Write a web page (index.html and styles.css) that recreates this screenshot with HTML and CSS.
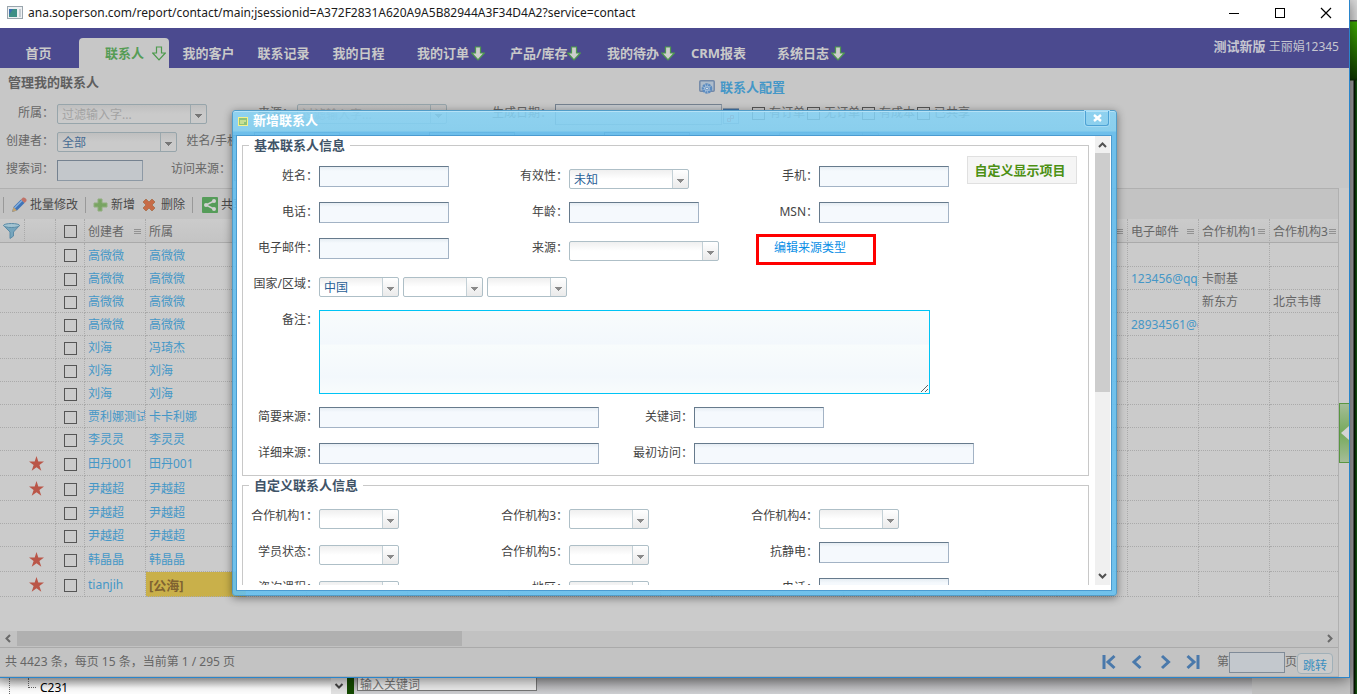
FILE: index.html
```html
<!DOCTYPE html>
<html lang="zh-CN">
<head>
<meta charset="utf-8">
<title>管理我的联系人</title>
<link rel="stylesheet" href="styles.css">
</head>
<body>
<svg class="defs" aria-hidden="true">
  <defs>
    <symbol id="arrow" viewBox="0 0 14 15"><path d="M4.500 1h5v6H13.300L7 13.800.7 7h3.800z" stroke-width="1.200"/></symbol>
    <symbol id="star" viewBox="0 0 15 15"><path d="M7.500 0l1.800 5.500H15l-4.600 3.400 1.900 5.800-4.800-3.500-4.800 3.500 1.900-5.800L0 5.500h5.700z" fill="#ba5648"/></symbol>
    <symbol id="cal" viewBox="0 0 17 17"><rect x=".5" y="1.500" width="15" height="15" fill="#c6cdd3" stroke="#8898a8"/><path d="M0 2h16v3H0z" fill="#3f74a8"/><path d="M7.500 8.500h3v3h-3zM4.500 11.500h3v3h-3z" fill="none" stroke="#b86a6a"/></symbol>
  </defs>
</svg>
<main class="window">
  <header class="titlebar">
    <svg width="16" height="13" viewBox="0 0 16 13"><rect x=".5" y=".5" width="15" height="12" fill="#eef1f3" stroke="#9aa5ad"/><rect x="2" y="3" width="8" height="8" fill="#3e8f86"/><path d="M2 3h4l-4 6z" fill="#3c6fb0"/><path d="M12 3h2v8h-2z" fill="#c5ccd2"/></svg>
    <span class="url">ana.soperson.com/report/contact/main;jsessionid=A372F2831A620A9A5B82944A3F34D4A2?service=contact</span>
    <span class="winbtns">
      <button aria-label="最小化"><svg width="12" height="12"><path d="M1 6.500h10" stroke="#000"/></svg></button>
      <button aria-label="最大化"><svg width="12" height="12"><rect x="1.500" y="1.500" width="9" height="9" fill="none" stroke="#000"/></svg></button>
      <button aria-label="关闭窗口"><svg width="12" height="12"><path d="M1 1l10 10M11 1L1 11" stroke="#000" stroke-width="1.200"/></svg></button>
    </span>
  </header>
  <nav class="nav">
    <a class="home" href="#">首页</a>
    <a class="active" href="#">联系人<svg width="14" height="15"><use href="#arrow"/></svg></a>
    <a class="plain" href="#">我的客户</a>
    <a class="plain" href="#">联系记录</a>
    <a class="plain" href="#">我的日程</a>
    <a class="drop" href="#">我的订单<svg width="14" height="15"><use href="#arrow"/></svg></a>
    <a class="drop product" href="#">产品/库存<svg width="14" height="15"><use href="#arrow"/></svg></a>
    <a class="drop" href="#">我的待办<svg width="14" height="15"><use href="#arrow"/></svg></a>
    <a class="plain" href="#">CRM报表</a>
    <a class="drop" href="#">系统日志<svg width="14" height="15"><use href="#arrow"/></svg></a>
    <span class="user"><b>测试新版</b> 王丽娟12345</span>
  </nav>
  <section class="head">
    <h1>管理我的联系人</h1>
    <a href="#"><svg width="16" height="15" viewBox="0 0 16 15"><rect x=".8" y=".8" width="14.400" height="10.400" rx="1" fill="#aebccb" stroke="#7389a8" stroke-width="1.500"/><circle cx="8" cy="8.500" r="4" fill="#b7cbe0" stroke="#5c8cc0" stroke-width="2.600" stroke-dasharray="2.200 .6"/><circle cx="8" cy="8.500" r="1.500" fill="#d4dde6" stroke="#5c8cc0"/></svg>联系人配置</a>
  </section>
  <section class="filters">
    <div class="frow">
      <label class="l57" for="f1">所属：</label><select class="w150 hint" id="f1"><option>过滤输入字...</option></select>
      <label class="l90" for="f2">来源：</label><select class="w150 hint" id="f2"><option>过滤输入字...</option></select>
      <label class="l108" for="f3">生成日期：</label><input class="date" id="f3"><svg class="cal" width="17" height="17"><use href="#cal"/></svg>
      <label class="tick"><input type="checkbox">有订单</label><label class="tick"><input type="checkbox">无订单</label><label class="tick"><input type="checkbox">有成本</label><label class="tick"><input type="checkbox">已共享</label>
    </div>
    <div class="frow">
      <label class="l57" for="f4">创建者：</label><select class="w120" id="f4"><option>全部</option></select>
      <label class="phone" for="f5">姓名/手机：</label><input class="w86" id="f5"><input class="w86 after" aria-label="电话"><input class="w86 after" aria-label="邮件"><select class="w100 after" aria-label="有效性"><option></option></select>
    </div>
    <div class="frow">
      <label class="l57" for="f6">搜索词：</label><input class="w86" id="f6">
      <label class="l91" for="f7">访问来源：</label><input class="w86" id="f7">
    </div>
  </section>
  <div class="main">
    <section class="list">
      <div class="toolbar">
        <i class="sep"></i>
        <button><svg width="16" height="16" viewBox="0 0 16 16"><path d="M1 15l1.500-5L10 2.500 13.500 6 6 13.500z" fill="#3f74b8"/><path d="M3.500 11L11 3.500" stroke="#86b0dc" stroke-width="1.500"/><path d="M10 2.500L12 .5Q14 0 15.500 2.500V4l-2 2z" fill="#bf7267"/><path d="M1 15l1.500-5L6 13.500z" fill="#c2a271"/></svg>批量修改</button>
        <i class="sep"></i>
        <button class="add"><svg width="15" height="14"><path d="M5 1h4v4h5v4H9v4H5V9H1V5h4z" fill="#79a463" stroke="#91ae7e"/></svg>新增</button>
        <button class="del"><svg width="14" height="14"><path d="M4 1l3 3 3-3 3 3-3 3 3 3-3 3-3-3-3 3-3-3 3-3-3-3z" fill="#c76b47" stroke="#ad7655"/></svg>删除</button>
        <i class="sep"></i>
        <button class="share"><svg width="16" height="16"><rect width="16" height="16" rx="1" fill="#559c59"/><path d="M12 4L4 8l8 4" fill="none" stroke="#d0d0d0" stroke-width="1.500"/><g fill="#d0d0d0"><circle cx="12" cy="4" r="2"/><circle cx="4" cy="8" r="2"/><circle cx="12" cy="12" r="2"/></g></svg>共享</button>
      </div>
      <table>
        <colgroup><col class="c25"><col class="c31"><col class="c29"><col class="c61"><col class="c100"><col class="c61"><col class="c101"><col class="c101"><col class="c152"><col class="c51"><col class="c61"><col class="c71"><col class="c71"><col class="c71"><col class="c71"><col class="c71"><col class="c71"><col class="c71"><col></colgroup>
        <thead><tr>
          <th class="funnel"><svg width="17" height="16" viewBox="0 0 17 16"><path d="M.5 2.500L7 9v6.500L10.500 13V9l6-6.500z" fill="#76a5bd" stroke="#5b8ba6"/><ellipse cx="8.500" cy="2.500" rx="8" ry="2" fill="#a3c3d1" stroke="#5b8ba6"/></svg></th><th></th><th class="mid"><input type="checkbox" aria-label="全选"></th>
          <th><div>创建者<i class="bars"></i></div></th><th>所属</th>
          <th></th><th></th><th></th><th></th><th></th><th></th><th></th><th></th><th></th><th></th><th><div><i class="bars"></i></div></th>
          <th><div>电子邮件<i class="bars"></i></div></th><th><div>合作机构1<i class="bars"></i></div></th><th><div>合作机构3<i class="bars"></i></div></th>
        </tr></thead>
        <tbody id="rows"></tbody>
      </table>
      <div class="hscroll">
        <svg width="17" height="15"><path d="M10 4L6.500 7.500 10 11" fill="none" stroke="#6a6a6a" stroke-width="2"/></svg><span class="thumb"></span><svg width="17" height="15"><path d="M7 4l3.500 3.500L7 11" fill="none" stroke="#6a6a6a" stroke-width="2"/></svg>
      </div>
      <footer class="pager">
        <span class="count">共 4423 条，每页 15 条，当前第 1 / 295 页</span>
        <button aria-label="第一页"><svg width="16" height="16"><path d="M3 1v14M13.500 2L7 8l6.500 6"/></svg></button>
        <button aria-label="上一页"><svg width="16" height="16"><path d="M11.500 2L5 8l6.500 6"/></svg></button>
        <button aria-label="下一页"><svg width="16" height="16"><path d="M5 2l6.500 6L5 14"/></svg></button>
        <button aria-label="最后一页"><svg width="16" height="16"><path d="M2.500 2L9 8l-6.500 6M13 1v14"/></svg></button>
        <label class="goto">第<input aria-label="页码">页</label><button class="jump">跳转</button>
      </footer>
    </section>
    <aside class="side"><button aria-label="展开侧栏"><svg width="8" height="14"><path d="M8 0v14L0 7z" fill="#d4d4d4"/></svg></button></aside>
  </div>

  <section class="dialog" role="dialog" aria-labelledby="dlg">
    <header>
      <svg width="10" height="9"><rect x=".5" y=".5" width="9" height="8" fill="#8ec37b" stroke="#f7f08a"/><path d="M2 4h6M2 6h4" stroke="#fffbb0"/></svg>
      <h2 id="dlg">新增联系人</h2>
      <button class="close" aria-label="关闭"><svg width="9" height="8"><path d="M1 1l7 6M8 1L1 7" stroke="#fff" stroke-width="2.400"/></svg></button>
    </header>
    <div class="dbody">
      <div class="scroller">
        <div class="forms">
          <fieldset class="first">
            <legend>基本联系人信息</legend>
            <div class="row"><div class="field"><label for="a1">姓名：</label><input id="a1"></div><div class="field"><label for="a2">有效性：</label><select class="w120" id="a2"><option>未知</option></select></div><div class="field wide"><label for="a3">手机：</label><input id="a3"><button class="custom">自定义显示项目</button></div></div>
            <div class="row"><div class="field"><label for="a4">电话：</label><input id="a4"></div><div class="field"><label for="a5">年龄：</label><input id="a5"></div><div class="field"><label for="a6">MSN：</label><input id="a6"></div></div>
            <div class="row"><div class="field"><label for="a7">电子邮件：</label><input id="a7"></div><div class="field"><label for="a8">来源：</label><select class="w150" id="a8"><option></option></select></div><div class="field linkcell"><a href="#">编辑来源类型</a><span class="mark"></span></div></div>
            <div class="row"><div class="field wide"><label for="a9">国家/区域：</label><select id="a9"><option>中国</option></select><select aria-label="省"><option></option></select><select aria-label="市"><option></option></select></div></div>
            <div class="row"><div class="field wide note"><label for="a10">备注：</label><textarea id="a10"></textarea></div></div>
            <div class="row"><div class="field half"><label for="a11">简要来源：</label><input class="w280" id="a11"></div><div class="field half"><label for="a12">关键词：</label><input id="a12"></div></div>
            <div class="row"><div class="field half"><label for="a13">详细来源：</label><input class="w280" id="a13"></div><div class="field half"><label for="a14">最初访问：</label><input class="w280" id="a14"></div></div>
          </fieldset>
          <fieldset>
            <legend>自定义联系人信息</legend>
            <div class="row"><div class="field"><label for="b1">合作机构1：</label><select id="b1"><option></option></select></div><div class="field"><label for="b2">合作机构3：</label><select id="b2"><option></option></select></div><div class="field"><label for="b3">合作机构4：</label><select id="b3"><option></option></select></div></div>
            <div class="row"><div class="field"><label for="b4">学员状态：</label><select id="b4"><option></option></select></div><div class="field"><label for="b5">合作机构5：</label><select id="b5"><option></option></select></div><div class="field"><label for="b6">抗静电：</label><input id="b6"></div></div>
            <div class="row"><div class="field"><label for="b7">咨询课程：</label><select id="b7"><option></option></select></div><div class="field"><label for="b8">地区：</label><select id="b8"><option></option></select></div><div class="field"><label for="b9">电话：</label><input id="b9"></div></div>
          </fieldset>
        </div>
        <div class="vscroll"><svg width="15" height="17"><path d="M4 11l3.500-3.500L11 11" fill="none" stroke="#505050" stroke-width="2"/></svg><span></span><svg width="15" height="17"><path d="M4 6l3.500 3.500L11 6" fill="none" stroke="#505050" stroke-width="2"/></svg></div>
      </div>
    </div>
  </section>
</main>
<div class="edge"></div>
<div class="under">
  <div class="tree"><i></i><i></i><span>C231</span></div>
  <div class="treedrop"><svg width="10" height="8"><path d="M1.500 2L5 5.500 8.500 2" fill="none" stroke="#444" stroke-width="2"/></svg></div>
  <div class="bar"></div>
  <input aria-label="关键词搜索" value="输入关键词">
</div>
<script src="app.js"></script>
</body>
</html>
```
FILE: app.js
```js
// creator, owner, starred, tall row, e-mail, partner 1, partner 3
const data = [
  ['高微微', '高微微'],
  ['高微微', '高微微', 0, 0, '123456@qq.com', '卡耐基'],
  ['高微微', '高微微', 0, 0, '', '新东方', '北京韦博'],
  ['高微微', '高微微', 0, 0, '28934561@qq.com'],
  ['刘海', '冯琦杰'],
  ['刘海', '刘海'],
  ['刘海', '刘海'],
  ['贾利娜测试', '卡卡利娜'],
  ['李灵灵', '李灵灵'],
  ['田丹001', '田丹001', 1, 1],
  ['尹越超', '尹越超', 1, 1],
  ['尹越超', '尹越超'],
  ['尹越超', '尹越超'],
  ['韩晶晶', '韩晶晶', 1, 1],
  ['tianjih', '[公海]', 1, 1]
];
document.getElementById('rows').innerHTML = data.map(([creator, owner, star, tall, mail = '', p1 = '', p3 = '']) => `
  <tr class="${tall ? 'tall' : ''}">
    <td class="none"></td>
    <td class="starcell">${star ? '<svg width="15" height="15"><use href="#star"/></svg>' : ''}</td>
    <td class="mid"><input type="checkbox" aria-label="选择 ${creator}"></td>
    <td><a href="#">${creator}</a></td>
    <td class="${owner === '[公海]' ? 'sea' : ''}"><a href="#">${owner}</a></td>
    ${'<td></td>'.repeat(11)}
    <td><a href="#">${mail}</a></td><td>${p1}</td><td>${p3}</td>
  </tr>`).join('');
```
FILE: styles.css
```css
* { box-sizing: border-box; }
html, body { height: 100%; }
body {
  margin: 0;
  display: grid;
  grid-template: minmax(678px, 1fr) 16px / minmax(0, 1fr) 7px;
  overflow: hidden;
  font: 12px/16px "Noto Sans", "Noto Sans CJK SC", sans-serif;
  color: #666;
  background: #c9c9c9;
}
input, select, textarea, button { font: inherit; color: inherit; margin: 0; }
button { background: none; border: 0; padding: 0; }
a { text-decoration: none; color: #4597c7; }
svg { display: block; flex: none; }
.defs { position: absolute; width: 0; height: 0; }

.window {
  position: relative;
  z-index: 1;
  display: flex;
  flex-direction: column;
  min-width: 0;
  background: #c7c7c7;
  border: solid #2a85cb;
  border-width: 0 1px 1px 0;
  box-shadow: 0 2px 14px rgba(0, 0, 0, .5);
}
.titlebar { height: 28px; padding: 0 10px 3px 7px; display: flex; align-items: center; gap: 5px; background: #fff; color: #1a1a1a; }
.winbtns { display: flex; gap: 20px; margin-left: auto; }
.winbtns button { width: 26px; display: flex; justify-content: center; }

.nav { height: 40px; padding-top: 10px; display: flex; background: #4b4a8f; font-size: 13px; font-weight: bold; }
.nav a { display: flex; align-items: center; color: #c9c9c9; white-space: nowrap; }
.nav a svg { fill: #cdcdcd; stroke: #4d9a4d; }
.nav .home { width: 79px; justify-content: center; padding-right: 2px; }
.nav .active { width: 90px; padding-left: 26px; gap: 8px; color: #559c55; background: #c7c7c7; border-radius: 4px 4px 0 0; margin-right: 2px; }
.nav .active svg { fill: none; stroke: #4d9a4d; }
.nav .plain { width: 75px; justify-content: center; }
.nav .drop { width: 95px; padding-left: 21px; gap: 2px; }
.nav .product { padding-left: 19px; gap: 0; }
.user { margin-left: auto; padding-right: 10px; color: #c6c6d0; font-weight: normal; font-size: 12px; white-space: nowrap; }
.user b { font-size: 13px; }

.head { height: 36px; padding-left: 8px; display: flex; font-size: 13px; }
.head h1 { width: 691px; margin: 6px 0 0; font-size: 13px; line-height: 16px; color: #5f5f5f; }
.head a { display: flex; align-items: center; align-self: flex-end; gap: 5px; height: 34px; font-weight: bold; }

.filters { height: 84px; display: flex; flex-direction: column; gap: 6px; }
.frow { display: flex; height: 22px; white-space: nowrap; }
.frow > label { text-align: right; padding: 1px 3px 0 0; flex: none; }
.l57 { width: 57px; }
.l90 { width: 90px; }
.l91 { width: 91px; }
.l108 { width: 108px; }
.phone { width: 77px; overflow: hidden; }
.w86 { width: 86px; }
.w100 { width: 100px; }
.w120 { width: 120px; }
.w150 { width: 150px; }
.w280 { width: 280px; }
.after { margin-left: 89px; }
.frow input:not([type]) { height: 21px; border: 1px solid; border-color: #758290 #8d99a5 #8d99a5 #758290; background: #c3c7cb; }
.frow input.date { width: 167px; }
.cal { margin: 3px 12px 0 1px; }
.frow > label.tick { width: 55px; padding: 1px 0 0; display: flex; gap: 4px; align-items: flex-start; }
.tick input { margin-top: 2px; }
input[type="checkbox"] { appearance: none; width: 13px; height: 13px; flex: none; border: 1px solid #555; background: transparent; }

select {
  appearance: none;
  height: 20px;
  padding: 2px 24px 0 4px;
  border: 1px solid #aebfc7;
  border-radius: 2px;
  color: #2a6096;
  background:
    linear-gradient(#8a8a8a, #8a8a8a) right 7px top 9px / 1px 4px no-repeat,
    linear-gradient(#8a8a8a, #8a8a8a) right 6px top 9px / 3px 3px no-repeat,
    linear-gradient(#8a8a8a, #8a8a8a) right 5px top 9px / 5px 2px no-repeat,
    linear-gradient(#8a8a8a, #8a8a8a) right 4px top 9px / 7px 1px no-repeat,
    linear-gradient(#c3d0d6, #c3d0d6) right 15px top 0 / 1px 20px no-repeat,
    linear-gradient(#fff, #e8e8e8) right 0 top 0 / 15px 20px no-repeat,
    linear-gradient(#efefef, #fff 9px);
}
.frow select {
  border-color: #97a5ab;
  color: #476b92;
  background:
    linear-gradient(#777, #777) right 7px top 9px / 1px 4px no-repeat,
    linear-gradient(#777, #777) right 6px top 9px / 3px 3px no-repeat,
    linear-gradient(#777, #777) right 5px top 9px / 5px 2px no-repeat,
    linear-gradient(#777, #777) right 4px top 9px / 7px 1px no-repeat,
    linear-gradient(#9ba8ad, #9ba8ad) right 15px top 0 / 1px 20px no-repeat,
    linear-gradient(#bfbfbf, #cacaca 9px);
}
.frow select.hint { color: #a3a3a3; }

.main { flex: 1; display: flex; min-height: 0; background: #cbcbcb; }
.list { flex: 1; min-width: 0; display: flex; flex-direction: column; border: 1px solid #b0b0b0; border-left: 0; }
.toolbar { height: 30px; flex: none; padding: 2px 3px 0; display: flex; align-items: center; background: #c3c3c3; color: #4a4a4a; }
.toolbar button { display: flex; align-items: center; gap: 3px; margin-left: 7px; }
.toolbar .del svg { margin-right: 2px; }
.toolbar .share { margin-left: 9px; }
.sep { width: 1px; height: 16px; background: #999; }
.sep:not(:first-child) { margin-left: 7px; }

table { width: 100%; table-layout: fixed; border-collapse: separate; border-spacing: 0; flex: none; }
.c25 { width: 25px; } .c29 { width: 29px; } .c31 { width: 31px; }
.c51 { width: 51px; } .c61 { width: 61px; } .c71 { width: 71px; }
.c100 { width: 100px; } .c101 { width: 101px; } .c152 { width: 152px; }
th, td { padding: 2px 0 0 3px; height: 23px; text-align: left; white-space: nowrap; overflow: hidden; border-right: 1px dotted #aaa; border-bottom: 1px dotted #aaa; }
th { height: 24px; font-weight: normal; border-bottom: 1px solid #aaa; background: linear-gradient(#cbcbcb, #c4c4c4); }
th.funnel { padding-top: 0; }
th div { display: flex; align-items: center; justify-content: space-between; padding-right: 4px; }
th:last-child div { padding-right: 2px; }
th:last-child, td:last-child { border-right: 0; }
.bars { width: 7px; height: 5px; margin-left: auto; flex: none; background: linear-gradient(#929292 1px, transparent 1px 2px, #929292 2px 3px, transparent 3px 4px, #929292 4px); }
.none { border-right-color: transparent; }
.mid { padding: 2px 0 0; }
.mid > * { display: block; margin: auto; }
.starcell { padding: 1px 0 0 4px; }
.tall td { height: 25px; }
tbody tr:first-child td { height: 24px; }
.sea { background: #c9b04a; }
.sea a { color: #806331; font-weight: bold; font-size: 13px; }

.hscroll { height: 16px; margin-top: auto; flex: none; display: flex; background: #c2c2c2; }
.thumb { width: 445px; background: #b0b0b0; margin-right: auto; height: 15px; }
.pager { height: 29px; flex: none; padding: 0 5px; display: flex; align-items: center; border-top: 1px solid #aaa; background: #c3c3c3; }
.count { margin-right: auto; }
.pager > button:not(.jump) { margin-right: 12px; }
.pager svg { fill: none; stroke: #4a79ab; stroke-width: 3; }
.goto { display: flex; align-items: center; margin-left: 4px; }
.goto input { width: 56px; height: 21px; border: 1px solid #7f8b98; background: #c3c8cd; }
.pager .jump { width: 36px; height: 21px; padding-top: 4px; margin: 3px 0 0; border: 1px solid #a0b0b8; border-radius: 4px; color: #3b8fc0; background: #cbcbcb; }
.side { width: 10px; padding-top: 215px; }
.side button { width: 10px; height: 60px; display: flex; align-items: center; justify-content: flex-end; border: 1px solid #599641; border-right: 0; background: linear-gradient(#a5bd98, #75a95a 50%, #a5bd98); }

.dialog {
  position: absolute;
  inset: 110px 232px 81px 232px;
  display: flex;
  flex-direction: column;
  padding: 0 4px 4px 3px;
  border: 1px solid #529dc8;
  border-radius: 3px;
  background: linear-gradient(rgba(134, 211, 246, .86), rgba(128, 208, 243, .86) 20px, rgba(98, 190, 240, .88) 21px, rgba(100, 192, 240, .88));
  box-shadow: 0 2px 8px rgba(0, 0, 0, .45), inset 0 1px #b5e2f7;
}
.dialog header { height: 24px; flex: none; padding-left: 2px; display: flex; align-items: flex-start; gap: 5px; }
.dialog header > svg { margin-top: 6px; }
.dialog h2 { margin: 1px 0 0; color: #fff; font-size: 13px; line-height: 16px; }
.close { margin: 0 3px 0 auto; width: 24px; height: 15px; display: flex; align-items: center; justify-content: center; border: 1px solid #4da2d5; border-top: 0; border-radius: 0 0 3px 3px; box-shadow: 0 0 0 1px #a5dbf4; }
.dbody { flex: 1; min-height: 0; padding-bottom: 5px; background: #fff; border: 1px solid #4b9bd0; color: #444; }
.scroller { height: 100%; display: flex; overflow: hidden; padding-right: 1px; }
.forms { flex: 1; min-width: 0; padding: 0 6px 0 5px; }
fieldset { margin: 1px 0 0; min-width: 0; padding: 13px 0 10px; border: 1px solid #c8c8c8; display: flex; flex-direction: column; gap: 14px; }
legend { margin-left: 6px; padding: 0 5px; font-size: 13px; line-height: 16px; font-weight: bold; color: #3f5468; }
.row { display: flex; min-height: 22px; }
.field { display: flex; align-items: flex-start; width: 250px; height: 22px; flex: none; }
.field.half { width: 375px; }
.field.wide { flex: 1; }
.field.note { height: auto; }
.field label { width: 76px; flex: none; text-align: right; white-space: nowrap; padding: 2px 1px 0 0; }
.field input { width: 130px; height: 21px; border: 1px solid; border-color: #667a8c #a3b3c5 #a3b3c5 #667a8c; background: linear-gradient(#e6edf3, #f5f9fd 4px); }
.field input.w280 { width: 280px; }
.field select { width: 80px; margin: 3px 4px 0 0; }
.field select.w120 { width: 120px; }
.field select.w150 { width: 150px; }
.field textarea { appearance: none; display: block; width: 611px; height: 84px; margin-bottom: -1px; border: 1px solid #00c4f5; outline: 0; background: linear-gradient(#f8fcfc, #f3f8fc 40%, #f8fcfc 42%, #f3f8fc 80%, #f8fcfc) padding-box; }
.custom { width: 110px; height: 28px; margin: -10px 0 0 18px; padding-right: 4px; flex: none; font-size: 13px; font-weight: bold; color: #4c9013; background: #f5f5f5; border: 1px solid #e0e0e0; white-space: nowrap; }
.linkcell { position: relative; padding: 2px 0 0 31px; }
.linkcell a { color: #0b8fe6; }
.mark { position: absolute; left: 13px; top: -4px; width: 120px; height: 31px; border: 3px solid #f00; }
.vscroll { width: 15px; display: flex; flex-direction: column; justify-content: space-between; background: #f0f0f0; }
.vscroll span { height: 239px; margin-bottom: auto; background: #cdcdcd; }

.edge { grid-row: 1 / 3; grid-column: 2; background: linear-gradient(#dcdcdc 20px, #333 20px 21px, #3fae00 22px, #123a00 78px, #0a2a00 80px, transparent 81px), linear-gradient(90deg, #a0a0a0 3px, #555 3px 4px, #061800 4px 5px, #145010 6px); }
.under { display: flex; min-width: 0; background: linear-gradient(90deg, transparent 1252px, #c3c3c3 1252px), linear-gradient(#a8a8aa, #d0d1d4); }
.tree { width: 331px; display: flex; padding-left: 9px; color: #000; background: linear-gradient(#ccc, #fff 10px); }
.tree i { width: 19px; border-left: 1px dotted #666; }
.tree i + i { width: 8px; height: 10px; border-bottom: 1px dotted #666; }
.tree span { padding-left: 4px; line-height: 19px; }
.treedrop { width: 16px; display: flex; align-items: center; justify-content: center; background: #e4e4e4; }
.bar { width: 7px; background: #144a00; }
.under input { width: 180px; height: 13px; margin-left: 3px; padding: 0 2px; border: 1px solid #777; border-top: 0; line-height: 12px; color: #777; background: #eee; }
```
